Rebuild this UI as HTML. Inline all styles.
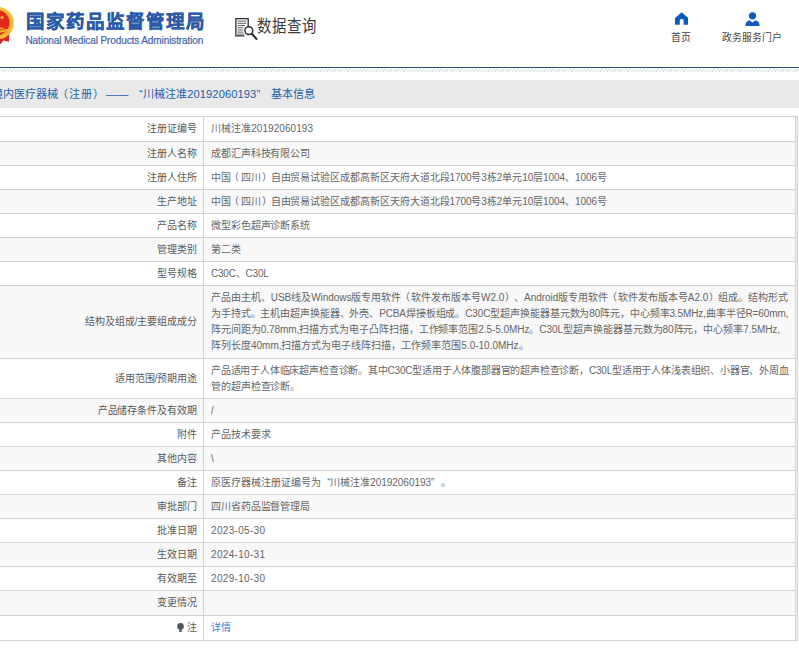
<!DOCTYPE html>
<html lang="zh-CN">
<head>
<meta charset="utf-8">
<title>国家药品监督管理局 数据查询</title>
<style>
*{box-sizing:border-box;margin:0;padding:0}
html,body{width:799px;height:649px;overflow:hidden;background:#fff}
body{position:relative;font-family:"Liberation Sans",sans-serif;font-size:10px;color:#555;text-spacing-trim:space-all}
.abs{position:absolute;white-space:nowrap}
/* header */
#emblem{left:-22px;top:0;width:40px;height:50px}
#logo-cn{left:26px;top:9.5px;font-size:18.5px;line-height:24px;font-weight:bold;color:#2b5aa9;letter-spacing:1px;-webkit-text-stroke:.35px #2b5aa9}
#logo-en{left:25.5px;top:34.5px;font-size:10px;line-height:12px;color:#3d64a9;letter-spacing:-.1px;-webkit-text-stroke:.2px #3d64a9}
#q-icon{left:234px;top:17px;width:24px;height:23px}
#q-text{left:257px;top:15px;font-size:14.4px;line-height:22px;color:#3a3a3a;letter-spacing:.9px;transform:scaleY(1.15);transform-origin:50% 50%}
.nav{text-align:center;font-size:9.8px;line-height:12px;color:#444}
#nav1{left:661px;top:32px;width:40px}
#nav2{left:712px;top:32px;width:80px}
#ico-home{left:674.7px;top:12px;width:13.4px;height:13px}
#ico-user{left:744.5px;top:11.5px;width:15px;height:14px}
#topline{left:0;top:67px;width:799px;height:1px;background:#1d4f84}
#hatch{left:0;top:69px;width:799px;height:3px;background:repeating-linear-gradient(135deg,#dcdcdc 0,#dcdcdc .6px,#fff 1.3px,#fff 2.1px,#dcdcdc 2.475px)}
#titlebar{left:0;top:80px;width:799px;height:28px;background:#e9e9e9;color:#1f5ea8;font-size:11.15px;line-height:28px;letter-spacing:.1px}
#titlebar span.t{position:absolute;left:-8.3px;top:0;white-space:nowrap}
.ql,.qr{display:inline-block;width:1em}
.ql{text-align:right;text-align-last:right}
.ln{letter-spacing:0}
.ln[style]{display:inline-block;vertical-align:baseline;text-align:justify;text-align-last:justify;white-space:nowrap}
.jw{display:inline-block;vertical-align:baseline;text-align:justify;text-align-last:justify;white-space:nowrap}
.pl{position:relative;left:-.16em}
.pr{position:relative;left:.1em}
.j0{width:180.00px}
.j1{width:59.61px}
.j2{width:20.00px}
.j3{width:60.00px}
.j4{width:323.45px}
.j5{width:49.52px}
.j6{width:49.52px}
.j7{width:49.52px}
.j8{width:39.61px}
.j9{width:39.61px}
.j10{width:39.61px}
.j11{width:39.61px}
.j12{width:111.59px}
.j13{width:81.89px}
.j14{width:99.02px}
.j15{width:19.81px}
.j16{width:39.61px}
.j17{width:19.81px}
.j18{width:39.61px}
.j19{width:39.61px}
.j20{width:39.61px}
.j21{width:39.61px}
.j22{width:39.61px}

.qr{text-align:left;text-align-last:left}
/* table */
#wrap{position:absolute;left:-30px;top:116px;width:828px;height:525px;border-top:1px solid #d2d2d2;border-right:1px solid #d2d2d2;border-bottom:1px solid #d2d2d2;background:#f0f0f0}
#tbl{width:826px;border-spacing:0;border-collapse:separate;table-layout:fixed;background:#fff}
#tbl td{border-right:1px solid #d2d2d2;border-bottom:1px solid #d2d2d2;line-height:16px;padding:0 8px;vertical-align:middle;white-space:nowrap;overflow:hidden}
#tbl td.k{width:234px;text-align:right;padding-right:6.3px;color:#5a5a5a;letter-spacing:-.1px}
#tbl td.v{color:#666;padding-left:7px}
#tbl tr{height:24px}
#tbl tr:nth-child(even) td{background:#f8f8f8}
#tbl tr.r1{height:25px}
#tbl tr.r8{height:73px}
#tbl tr.r9{height:40px}
#tbl tr.rl{height:25px}
a{color:#3580dc;text-decoration:none}
.bulb{display:inline-block;width:7px;height:9.5px;vertical-align:-1px;margin-right:2.4px}
</style>
</head>
<body>

<!-- header -->
<svg id="emblem" class="abs" viewBox="-22 0 40 50">
  <path d="M-2 37 L9.2 34.6 L9 41.8 L3.4 40.6 L0.6 44 L-8 44 Z" fill="#d8261d"/>
  <ellipse cx="-2.6" cy="23.1" rx="16.4" ry="16.3" fill="#f3b42c"/>
  <ellipse cx="-2.6" cy="23.1" rx="15" ry="14.9" fill="none" stroke="#f8cc52" stroke-width="1"/>
  <ellipse cx="-2.8" cy="22.6" rx="12.3" ry="12.6" fill="#e5281e"/>
  <path d="M2 15.2 l.6 1.5 1.6.1 -1.2 1 .4 1.6 -1.4-.9 -1.4.9 .4-1.6 -1.2-1 1.6-.1z" fill="#f6c744"/>
  <path d="M-14 29.2 Q-3 32.6 7.2 28.4 L8 30.6 Q-3 35.4 -14 32 Z" fill="#f3b42c"/>
  <path d="M-12 27.6 H3.6 V29.4 H-12 Z" fill="#f1a82a"/>
</svg>
<div id="logo-cn" class="abs"><span class="jw j0">国家药品监督管理局</span></div>
<div id="logo-en" class="abs">National Medical Products Administration</div>

<svg id="q-icon" class="abs" viewBox="0 0 24 23">
  <path d="M14.2 9 V1.7 H1.9 V18.8 H10.4" fill="none" stroke="#2b2b36" stroke-width="1.3"/>
  <path d="M3.5 4.1 H12.3 M3.5 6.3 H12.3 M3.5 8.5 H11 M3.5 10.7 H9.4 M3.5 12.9 H9 M3.5 15.1 H9.2 M3.5 17.1 H10" stroke="#4a4a55" stroke-width=".9"/>
  <circle cx="14.8" cy="13.6" r="3.95" fill="#fff" stroke="#2b2b36" stroke-width="1.5"/>
  <path d="M18 17 L22.4 21.9" stroke="#2b2b36" stroke-width="2.1" stroke-linecap="round"/>
</svg>
<div id="q-text" class="abs"><span class="jw j1">数据查询</span></div>

<svg id="ico-home" class="abs" viewBox="0 0 14 13">
  <path d="M7 0 L14 6 L14 13 L9 13 L9 8.4 Q9 7 7 7 Q5 7 5 8.4 L5 13 L0 13 L0 6 Z" fill="#0d5bbd"/>
</svg>
<div id="nav1" class="abs nav"><span class="jw j2">首页</span></div>
<svg id="ico-user" class="abs" viewBox="0 0 15 14">
  <circle cx="7.5" cy="3.8" r="3.6" fill="#0d5bbd"/>
  <path d="M0.3 14 Q0.6 9 4.6 8.2 L7.5 10.6 L10.4 8.2 Q14.4 9 14.7 14 Z" fill="#0d5bbd"/>
</svg>
<div id="nav2" class="abs nav"><span class="jw j3">政务服务门户</span></div>

<div id="topline" class="abs"></div>
<div id="hatch" class="abs"></div>
<div id="titlebar" class="abs"><span class="t"><span class="jw j4">境内医疗器械<span class="pl">（</span>注册<span class="pr">）</span> —— <span class="ql">“</span>川械注准20192060193<span class="qr">”</span> 基本信息</span></span></div>

<!-- detail table -->
<div id="wrap">
<table id="tbl">
<tr class="r1"><td class="k"><span class="jw j5">注册证编号</span></td><td class="v"><span class="ln" style="letter-spacing:0.061px;width:102.1px">川械注准20192060193</span></td></tr>
<tr><td class="k"><span class="jw j6">注册人名称</span></td><td class="v"><span class="ln" style="letter-spacing:-0.100px;width:99.0px">成都汇声科技有限公司</span></td></tr>
<tr><td class="k"><span class="jw j7">注册人住所</span></td><td class="v"><span class="ln" style="letter-spacing:-0.066px;width:395.9px">中国<span class="pl">（</span>四川<span class="pr">）</span>自由贸易试验区成都高新区天府大道北段1700号3栋2单元10层1004、1006号</span></td></tr>
<tr><td class="k"><span class="jw j8">生产地址</span></td><td class="v"><span class="ln" style="letter-spacing:-0.066px;width:395.9px">中国<span class="pl">（</span>四川<span class="pr">）</span>自由贸易试验区成都高新区天府大道北段1700号3栋2单元10层1004、1006号</span></td></tr>
<tr><td class="k"><span class="jw j9">产品名称</span></td><td class="v"><span class="ln" style="letter-spacing:-0.100px;width:99.0px">微型彩色超声诊断系统</span></td></tr>
<tr><td class="k"><span class="jw j10">管理类别</span></td><td class="v"><span class="ln" style="letter-spacing:-0.100px;width:29.7px">第二类</span></td></tr>
<tr><td class="k"><span class="jw j11">型号规格</span></td><td class="v"><span class="ln" style="letter-spacing:-0.209px;width:57.6px">C30C、C30L</span></td></tr>
<tr class="r8"><td class="k"><span class="jw j12">结构及组成/主要组成成分</span></td><td class="v"><span class="ln" style="letter-spacing:-0.037px;width:577.0px">产品由主机、USB线及Windows版专用软件<span class="pl">（</span>软件发布版本号W2.0<span class="pr">）</span>、Android版专用软件<span class="pl">（</span>软件发布版本号A2.0<span class="pr">）</span>组成。结构形式</span><br><span class="ln" style="letter-spacing:-0.110px;width:577.3px">为手持式。主机由超声换能器、外壳、PCBA焊接板组成。C30C型超声换能器基元数为80阵元，中心频率3.5MHz,曲率半径R=60mm,</span><br><span class="ln" style="letter-spacing:-0.054px;width:569.0px">阵元间距为0.78mm,扫描方式为电子凸阵扫描，工作频率范围2.5-5.0MHz。C30L型超声换能器基元数为80阵元，中心频率7.5MHz,</span><br><span class="ln" style="letter-spacing:-0.008px;width:317.5px">阵列长度40mm,扫描方式为电子线阵扫描，工作频率范围5.0-10.0MHz。</span></td></tr>
<tr class="r9"><td class="k"><span class="jw j13">适用范围/预期用途</span></td><td class="v"><span class="ln" style="letter-spacing:-0.192px;width:577.6px">产品适用于人体临床超声检查诊断。其中C30C型适用于人体腹部器官的超声检查诊断，C30L型适用于人体浅表组织、小器官、外周血</span><br><span class="ln" style="letter-spacing:-0.100px;width:89.1px">管的超声检查诊断。</span></td></tr>
<tr><td class="k"><span class="jw j14">产品储存条件及有效期</span></td><td class="v"><span class="ln">/</span></td></tr>
<tr><td class="k"><span class="jw j15">附件</span></td><td class="v"><span class="ln" style="letter-spacing:-0.100px;width:59.4px">产品技术要求</span></td></tr>
<tr><td class="k"><span class="jw j16">其他内容</span></td><td class="v"><span class="ln">\</span></td></tr>
<tr><td class="k"><span class="jw j17">备注</span></td><td class="v"><span class="ln" style="letter-spacing:-0.048px;width:239.8px">原医疗器械注册证编号为<span class="ql">“</span>川械注准20192060193<span class="qr">”</span>。</span></td></tr>
<tr><td class="k"><span class="jw j18">审批部门</span></td><td class="v"><span class="ln" style="letter-spacing:-0.100px;width:99.0px">四川省药品监督管理局</span></td></tr>
<tr><td class="k"><span class="jw j19">批准日期</span></td><td class="v"><span class="ln" style="letter-spacing:0.324px;width:54.4px">2023-05-30</span></td></tr>
<tr><td class="k"><span class="jw j20">生效日期</span></td><td class="v"><span class="ln" style="letter-spacing:0.324px;width:54.4px">2024-10-31</span></td></tr>
<tr><td class="k"><span class="jw j21">有效期至</span></td><td class="v"><span class="ln" style="letter-spacing:0.324px;width:54.4px">2029-10-30</span></td></tr>
<tr class="rl"><td class="k"><span class="jw j22">变更情况</span></td><td class="v"></td></tr>
<tr class="rl"><td class="k"><svg class="bulb" viewBox="0 0 7 9.5"><circle cx="3.5" cy="3.4" r="3.3" fill="#555"/><rect x="2.2" y="6.2" width="2.6" height="3" rx=".8" fill="#555"/></svg>注</td><td class="v"><span class="ln" style="letter-spacing:-0.100px;width:19.8px"><a>详情</a></span></td></tr>
</table>
</div>

</body>
</html>
